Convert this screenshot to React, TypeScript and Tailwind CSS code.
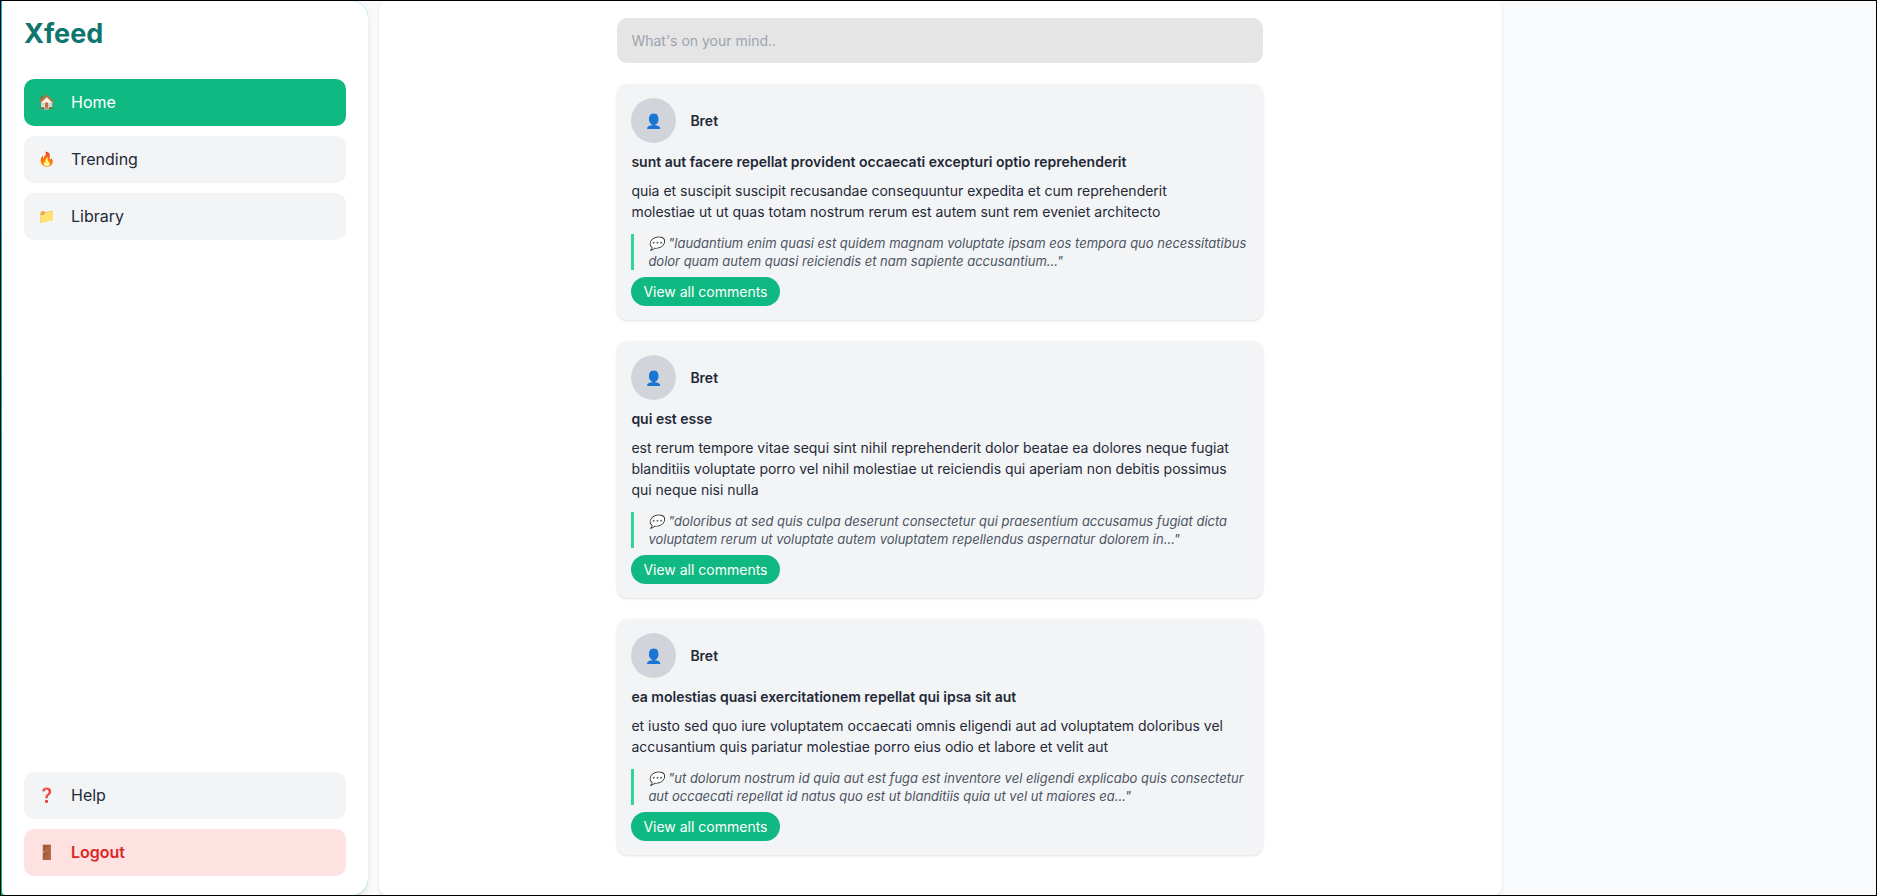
import React from "react";

type Post = { author: string; title: string; body: string; comment: string };

const posts: Post[] = [
  {
    author: "Bret",
    title: "sunt aut facere repellat provident occaecati excepturi optio reprehenderit",
    body: "quia et suscipit suscipit recusandae consequuntur expedita et cum reprehenderit molestiae ut ut quas totam nostrum rerum est autem sunt rem eveniet architecto",
    comment:
      "laudantium enim quasi est quidem magnam voluptate ipsam eos tempora quo necessitatibus dolor quam autem quasi reiciendis et nam sapiente accusantium...",
  },
  {
    author: "Bret",
    title: "qui est esse",
    body: "est rerum tempore vitae sequi sint nihil reprehenderit dolor beatae ea dolores neque fugiat blanditiis voluptate porro vel nihil molestiae ut reiciendis qui aperiam non debitis possimus qui neque nisi nulla",
    comment:
      "doloribus at sed quis culpa deserunt consectetur qui praesentium accusamus fugiat dicta voluptatem rerum ut voluptate autem voluptatem repellendus aspernatur dolorem in...",
  },
  {
    author: "Bret",
    title: "ea molestias quasi exercitationem repellat qui ipsa sit aut",
    body: "et iusto sed quo iure voluptatem occaecati omnis eligendi aut ad voluptatem doloribus vel accusantium quis pariatur molestiae porro eius odio et labore et velit aut",
    comment:
      "ut dolorum nostrum id quia aut est fuga est inventore vel eligendi explicabo quis consectetur aut occaecati repellat id natus quo est ut blanditiis quia ut vel ut maiores ea...",
  },
];

function NavItem({ icon, label, tone }: { icon: string; label: string; tone: string }) {
  return (
    <a href="#" className={`flex h-[47px] items-center rounded-[10px] px-3.5 pb-0.5 text-base leading-5 ${tone}`}>
      <span className="w-[33px] text-sm" aria-hidden="true">
        {icon}
      </span>
      {label}
    </a>
  );
}

function PostCard({ post }: { post: Post }) {
  return (
    <article className="rounded-[10px] bg-[#f3f4f6] p-3.5 shadow-sm">
      <header className="flex items-center gap-3.5">
        <span className="flex size-[45px] items-center justify-center rounded-full bg-[#d1d5db]">👤</span>
        <span className="font-semibold">{post.author}</span>
      </header>
      <h2 className="mt-2 font-semibold">{post.title}</h2>
      <p className="mt-2 pr-[18px]">{post.body}</p>
      <blockquote className="mt-3 border-l-3 border-[#34d399] pl-3.5 text-[13px] leading-[18px] text-[#4b5563] italic">
        {`💬 "${post.comment}"`}
      </blockquote>
      <button type="button" className="mt-[7px] block rounded-full bg-[#10b981] px-3 py-1 text-white">
        View all comments
      </button>
    </article>
  );
}

export default function App() {
  return (
    <div className="flex h-screen overflow-hidden border border-black bg-[#f9fafb] font-['Inter','Noto_Color_Emoji',sans-serif] text-sm leading-[21px] text-[#1f2937]">
      <div className="mr-[11px] flex w-[367px] shrink-0 rounded-r-2xl bg-linear-to-b from-cyan-500 to-emerald-500 pl-px shadow-md">
        <aside className="flex flex-1 flex-col rounded-r-2xl rounded-bl-sm bg-white px-[22px] pt-[15px] pb-[19px]">
          <h1 className="text-[27px] leading-9 font-bold text-[#0f766e]">Xfeed</h1>
          <nav aria-label="Main" className="mt-[27px] flex flex-1 flex-col gap-2.5">
            <NavItem icon="🏠" label="Home" tone="bg-[#10b981] text-white" />
            <NavItem icon="🔥" label="Trending" tone="bg-[#f3f4f6]" />
            <NavItem icon="📁" label="Library" tone="bg-[#f3f4f6]" />
            <div className="mt-auto flex flex-col gap-2.5">
              <NavItem icon="❓" label="Help" tone="bg-[#f3f4f6]" />
              <NavItem icon="🚪" label="Logout" tone="bg-[#fee2e2] font-semibold text-[#dc2626]" />
            </div>
          </nav>
        </aside>
      </div>
      <main className="flex flex-3 justify-center rounded-lg bg-white pt-[17px] shadow-sm">
        <div className="flex w-[646px] flex-col gap-[21px]">
          <input
            type="text"
            aria-label="What's on your mind"
            placeholder="What's on your mind.."
            className="h-[45px] w-full shrink-0 rounded-[10px] bg-[#e5e5e5] px-3.5 placeholder:text-[#9ca3af]"
          />
          {posts.map((post) => (
            <PostCard key={post.title} post={post} />
          ))}
        </div>
      </main>
      <div className="flex-1" />
    </div>
  );
}
